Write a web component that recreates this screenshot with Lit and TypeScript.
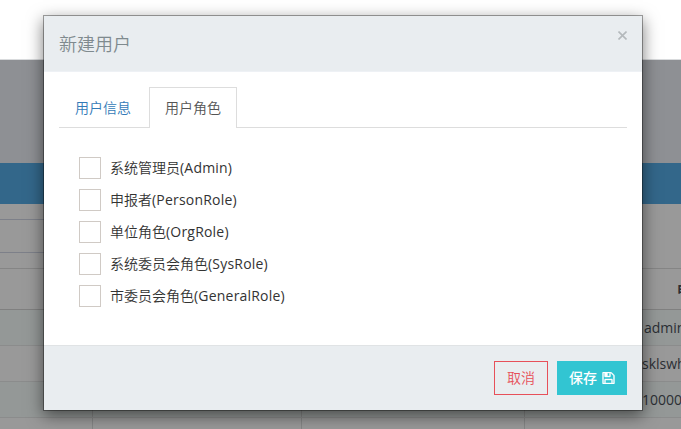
import { LitElement, html, css } from 'lit';
import { customElement, property, state } from 'lit/decorators.js';
import { classMap } from 'lit/directives/class-map.js';

interface Role {
  label: string;
  code: string;
}

@customElement('user-page')
export class UserPage extends LitElement {
  @property({ type: Array })
  names: string[] = [];

  static styles = css`
    :host {
      display: block;
      height: 429px;
      overflow: hidden;
      background: #999999;
      color: #2b2f34;
      font-size: 14px;
    }

    .top {
      height: 59px;
      background: #ffffff;
      border-bottom: 1px solid #d9dbdd;
    }

    .band {
      height: 103px;
      background: #8e9094;
    }

    .title-bar {
      height: 41px;
      background: #33678a;
    }

    .filters {
      box-sizing: border-box;
      height: 64px;
      padding-top: 15px;
    }

    .field {
      box-sizing: border-box;
      width: 280px;
      height: 34px;
      border: 1px solid #7d8089;
      border-left: none;
    }

    .row {
      box-sizing: border-box;
      display: grid;
      grid-template-columns: 93px 209px 223px 1fr;
      height: 36px;
      border-bottom: 1px solid #8b8c8c;
    }

    .row:nth-child(even) {
      background: #949897;
    }

    .row.head {
      height: 42px;
      border-top: 1px solid #858585;
      border-bottom: 1px solid #808080;
      font-weight: bold;
    }

    .cell {
      box-sizing: border-box;
      display: flex;
      align-items: center;
      border-right: 1px solid #858686;
      white-space: nowrap;
    }

    .cell:last-child {
      padding-left: 117px;
      border-right: none;
    }

    .row:nth-child(2) .cell:last-child {
      padding-left: 119px;
    }

    .head .cell:last-child {
      padding-left: 152px;
    }
  `;

  render() {
    return html`
      <div class="top"></div>
      <div class="band"></div>
      <div class="title-bar"></div>
      <div class="filters"><div class="field"></div></div>
      <div class="table">
        <div class="row head">
          <div class="cell"></div>
          <div class="cell"></div>
          <div class="cell"></div>
          <div class="cell">申</div>
        </div>
        ${this.names.map(
          (name) => html`
            <div class="row">
              <div class="cell"></div>
              <div class="cell"></div>
              <div class="cell"></div>
              <div class="cell">${name}</div>
            </div>
          `
        )}
      </div>
    `;
  }
}

@customElement('role-option')
export class RoleOption extends LitElement {
  @property({ type: String })
  label = '';

  @property({ type: String })
  code = '';

  @property({ type: Boolean })
  checked = false;

  static styles = css`
    :host {
      display: flex;
      align-items: center;
      height: 22px;
      color: #333333;
      font-size: 14px;
      line-height: 20px;
      cursor: pointer;
    }

    .box {
      box-sizing: border-box;
      width: 22px;
      height: 22px;
      margin-right: 9px;
      border: 1px solid #d0cac5;
      background: #ffffff;
    }

    .box.checked {
      background: #32c5d2;
    }

    .code {
      font-weight: 400;
      letter-spacing: 0.2px;
    }
  `;

  render() {
    return html`
      <span
        class=${classMap({ box: true, checked: this.checked })}
        @click=${() => (this.checked = !this.checked)}
      ></span>
      <span class="text">${this.label}<span class="code">(${this.code})</span></span>
    `;
  }
}

@customElement('user-dialog')
export class UserDialog extends LitElement {
  @property({ type: Array })
  roles: Role[] = [];

  @state()
  private tab = 1;

  private tabs = ['用户信息', '用户角色'];

  static styles = css`
    :host {
      box-sizing: border-box;
      display: flex;
      flex-direction: column;
      width: 600px;
      height: 396px;
      border: 1px solid rgba(0, 0, 0, 0.35);
      background: #ffffff;
      background-clip: padding-box;
      box-shadow: 0 5px 15px rgba(0, 0, 0, 0.5);
      font-size: 14px;
      font-weight: 350;
    }

    .header {
      box-sizing: border-box;
      display: flex;
      justify-content: space-between;
      height: 56px;
      padding: 15px 15px 0;
      border-bottom: 1px solid #eef1f5;
      background: #e9edf0;
    }

    .title {
      color: #7f8a8e;
      font-size: 18px;
      line-height: 26px;
    }

    .close {
      width: 9px;
      height: 9px;
      stroke: #b4b9bc;
      stroke-width: 1.6;
    }

    .body {
      flex: 1;
      padding: 15px 15px 0;
    }

    .tabs {
      display: flex;
      height: 40px;
      border-bottom: 1px solid #dddddd;
    }

    .tab {
      box-sizing: border-box;
      height: 41px;
      padding: 0 15px;
      border: 1px solid transparent;
      border-bottom: none;
      color: #337ab7;
      line-height: 40px;
      cursor: pointer;
    }

    .tab + .tab {
      margin-left: 2px;
    }

    .tab.active {
      border-color: #dddddd;
      background: #ffffff;
      color: #555555;
    }

    .roles {
      display: flex;
      flex-direction: column;
      gap: 10px;
      padding: 29px 20px;
    }

    .footer {
      box-sizing: border-box;
      display: flex;
      justify-content: flex-end;
      gap: 9px;
      height: 65px;
      padding: 15px 15px 0;
      border-top: 1px solid #e0e3e5;
      background: #e9edf0;
    }

    button {
      box-sizing: border-box;
      display: flex;
      align-items: center;
      justify-content: center;
      height: 34px;
      padding: 0 12px 2px;
      border: 1px solid #e7505a;
      background: transparent;
      color: #e7505a;
      font: inherit;
      cursor: pointer;
    }

    .save {
      gap: 5px;
      padding: 0 11px 2px;
      border-color: #32c5d2;
      background: #32c5d2;
      color: #ffffff;
      font-weight: 500;
    }

    .save svg {
      width: 13px;
      height: 12px;
      margin-top: 1px;
      stroke: currentColor;
      stroke-width: 50;
    }
  `;

  render() {
    return html`
      <div class="header">
        <div class="title">新建用户</div>
        <svg class="close" viewBox="0 0 9 9"><path d="M.5 .5l8 8M8.5 .5l-8 8" /></svg>
      </div>
      <div class="body">
        <div class="tabs">
          ${this.tabs.map(
            (name, i) => html`
              <div
                class=${classMap({ tab: true, active: i === this.tab })}
                @click=${() => (this.tab = i)}
              >${name}</div>
            `
          )}
        </div>
        <div class="roles">
          ${this.roles.map(
            (role) => html`<role-option .label=${role.label} .code=${role.code}></role-option>`
          )}
        </div>
      </div>
      <div class="footer">
        <button>取消</button>
        <button class="save">
          保存
          <svg viewBox="0 0 1536 1536">
            <path
              fill="currentColor"
              d="M384 1408h768v-384H384v384zm896 0h128V512q0-14-10-38.500t-20-34.500l-281-281q-10-10-34-20t-39-10v416q0 40-28 68t-68 28H352q-40 0-68-28t-28-68V128H128v1280h128V992q0-40 28-68t68-28h832q40 0 68 28t28 68v416zM896 480V160q0-13-9.500-22.500T864 128H672q-13 0-22.500 9.500T640 160v320q0 13 9.500 22.500T672 512h192q13 0 22.500-9.500T896 480zm640 32v928q0 40-28 68t-68 28H96q-40 0-68-28t-28-68V96q0-40 28-68T96 0h928q40 0 88 20t76 48l280 280q28 28 48 76t20 88z"
            />
          </svg>
        </button>
      </div>
    `;
  }
}

@customElement('app-root')
export class AppRoot extends LitElement {
  private names = ['admin', 'sklswh', '100001', ''];

  private roles: Role[] = [
    { label: '系统管理员', code: 'Admin' },
    { label: '申报者', code: 'PersonRole' },
    { label: '单位角色', code: 'OrgRole' },
    { label: '系统委员会角色', code: 'SysRole' },
    { label: '市委员会角色', code: 'GeneralRole' },
  ];

  static styles = css`
    :host {
      display: block;
      position: relative;
      height: 429px;
      overflow: hidden;
      font-family: 'Open Sans', 'Noto Sans CJK SC', sans-serif;
    }

    user-dialog {
      position: absolute;
      top: 15px;
      left: 43px;
    }
  `;

  render() {
    return html`
      <user-page .names=${this.names}></user-page>
      <user-dialog .roles=${this.roles}></user-dialog>
    `;
  }
}
